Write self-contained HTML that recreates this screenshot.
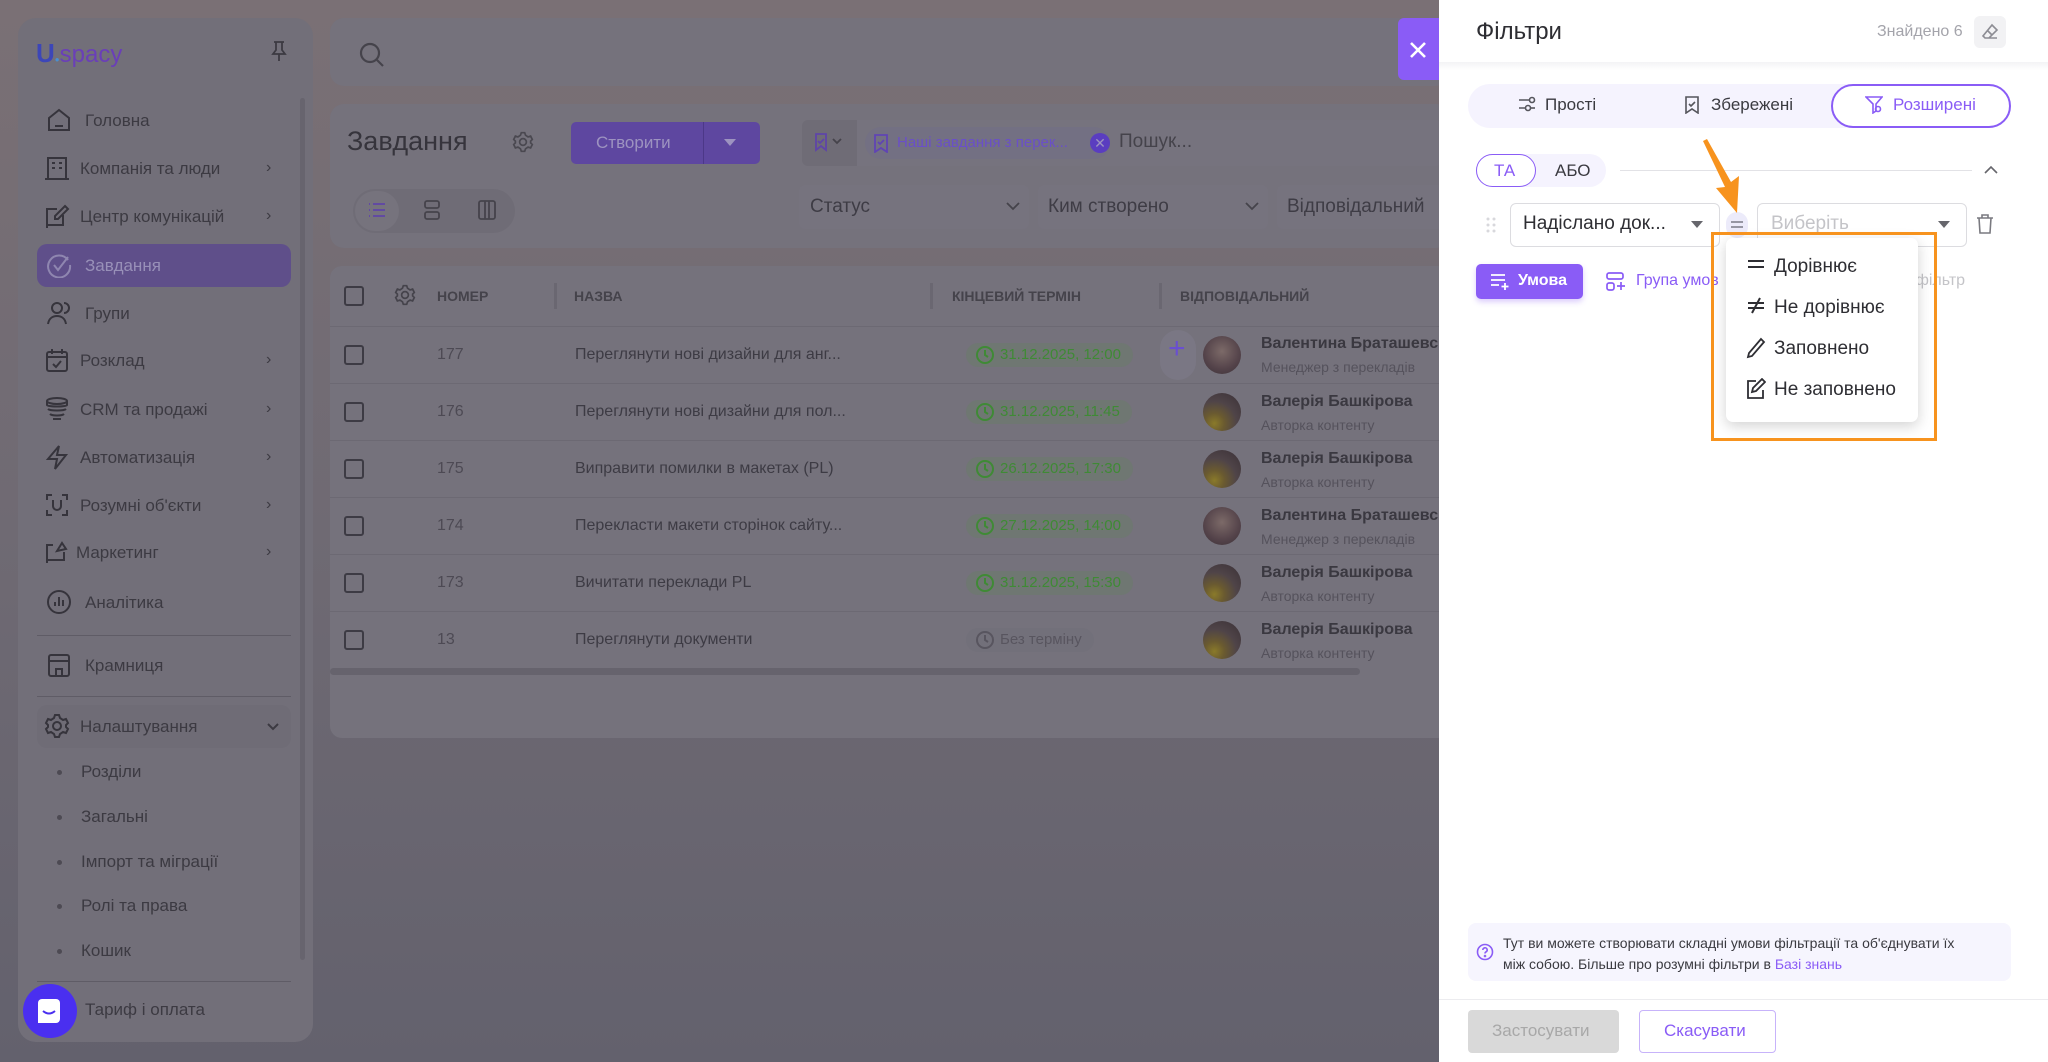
<!DOCTYPE html>
<html><head><meta charset="utf-8">
<style>
*{box-sizing:border-box;margin:0;padding:0}
body{width:2048px;height:1062px;overflow:hidden;position:relative;font-family:"Liberation Sans","Noto Sans CJK SC",sans-serif;background:linear-gradient(180deg,#7a7075 0%,#6f6a73 50%,#63616d 100%)}
.a{position:absolute}
.t{position:absolute;white-space:nowrap}
.card{position:absolute;background:#75727c;border-radius:14px}
.mi{position:absolute;left:85px;font-size:17px;color:#3c3a42;white-space:nowrap}
.ic{position:absolute;left:46px;width:26px;height:26px}
.chev{position:absolute;left:266px;font-size:16px;color:#3c3a42}
.sub{position:absolute;left:81px;font-size:17px;color:#3c3a42;white-space:nowrap}
.dot{position:absolute;left:57px;width:5px;height:5px;border-radius:50%;background:#4d4a53}
.row{position:absolute;left:330px;width:1109px;height:57px;border-top:1px solid #6c6973}
.cb{position:absolute;left:344px;width:20px;height:20px;border:2px solid #3d3b44;border-radius:3px}
.num{position:absolute;left:437px;font-size:16px;color:#4d4a54}
.nm{position:absolute;left:575px;font-size:16px;color:#3d3b44;white-space:nowrap}
.pill{position:absolute;left:966px;height:24px;border-radius:12px;background:#6f7772;color:#3f8a35;font-size:15px;padding:3px 12px 0 34px;white-space:nowrap}
.pill svg{position:absolute;left:9px;top:2px}
.av{position:absolute;left:1203px;width:38px;height:38px;border-radius:50%;background:radial-gradient(circle at 50% 40%,#7c6a68 0,#54434a 60%,#3c3238 100%)}
.av.s{background:radial-gradient(circle at 30% 80%,#8a7a2a 0,#6a5a30 25%,#4f4448 55%,#3a3036 100%)}
.pn{position:absolute;left:1261px;font-size:16px;color:#3a3840;font-weight:bold;white-space:nowrap}
.pr{position:absolute;left:1261px;font-size:14px;color:#55525c;white-space:nowrap}
.mn{position:absolute;left:1774px;font-size:19px;color:#2e2e33;white-space:nowrap}
</style></head><body>

<!-- sidebar -->
<div class="card" style="left:18px;top:18px;width:295px;height:1024px;background:#726f79;border-radius:18px"></div>
<div class="a" style="left:300px;top:98px;width:5px;height:862px;background:#67646e;border-radius:3px"></div>
<div class="t" style="left:36px;top:38px;font-size:26px;color:#5a3fb0;font-weight:bold"><span style="color:#3c46b8">U</span><span style="font-size:8px;color:#4a8fd0">●</span><span style="color:#6a3fb8;font-weight:normal;font-size:24px">spacy</span></div>
<svg class="a" style="left:270px;top:40px" width="18" height="22" viewBox="0 0 18 22" fill="none" stroke="#3c3a42" stroke-width="1.8"><path d="M4 2h10M6 2v8l-3 4h12l-3-4V2M9 14v7"/></svg>

<div class="a" style="left:37px;top:244px;width:254px;height:43px;background:#5f4f8a;border-radius:10px"></div>

<svg class="ic" style="top:107px" viewBox="0 0 26 26" fill="none" stroke="#36343c" stroke-width="2"><path d="M3 11L13 3l10 8v12H3z M9 19h8"/></svg>
<div class="mi" style="top:111px">Головна</div>
<svg class="ic" style="top:155px;left:44px" viewBox="0 0 26 26" fill="none" stroke="#36343c" stroke-width="2"><path d="M4 24V3h18v21M1 24h24M8 8h3M15 8h3M8 13h3M15 13h3"/></svg>
<div class="mi" style="top:159px;left:80px">Компанія та люди</div><div class="chev" style="top:159px">›</div>
<svg class="ic" style="top:203px;left:44px" viewBox="0 0 26 26" fill="none" stroke="#36343c" stroke-width="2"><path d="M3 25V6h10M21 3l3 3-10 10H11v-3z M3 22h16V12"/></svg>
<div class="mi" style="top:207px;left:80px">Центр комунікацій</div><div class="chev" style="top:207px">›</div>
<svg class="ic" style="top:252px" viewBox="0 0 26 26" fill="none" stroke="#8f86b0" stroke-width="2"><path d="M22 8A11 11 0 1 0 24 13M8 13l4 5 10-13"/></svg>
<div class="mi" style="top:256px;color:#9890b8">Завдання</div>
<svg class="ic" style="top:300px" viewBox="0 0 26 26" fill="none" stroke="#36343c" stroke-width="2"><circle cx="11" cy="8" r="5"/><path d="M2 24c1-6 5-8 9-8s8 2 9 8M18 3a5 5 0 0 1 0 10"/></svg>
<div class="mi" style="top:304px">Групи</div>
<svg class="ic" style="top:347px;left:44px" viewBox="0 0 26 26" fill="none" stroke="#36343c" stroke-width="2"><rect x="3" y="5" width="20" height="19" rx="2"/><path d="M3 10h20M8 2v5M18 2v5M9 17l3 3 5-6"/></svg>
<div class="mi" style="top:351px;left:80px">Розклад</div><div class="chev" style="top:351px">›</div>
<svg class="ic" style="top:396px;left:44px" viewBox="0 0 26 26" fill="none" stroke="#36343c" stroke-width="2"><ellipse cx="13" cy="5" rx="10" ry="3"/><path d="M3 5v4c0 2 20 2 20 0V5M4 13c2 2 16 2 18 0M6 18c2 2 12 2 14 0M9 23h8"/></svg>
<div class="mi" style="top:400px;left:80px">CRM та продажі</div><div class="chev" style="top:400px">›</div>
<svg class="ic" style="top:444px;left:44px" viewBox="0 0 26 26" fill="none" stroke="#36343c" stroke-width="2"><path d="M15 2L4 15h9l-2 10 11-14h-9z"/></svg>
<div class="mi" style="top:448px;left:80px">Автоматизація</div><div class="chev" style="top:448px">›</div>
<svg class="ic" style="top:492px;left:44px" viewBox="0 0 26 26" fill="none" stroke="#36343c" stroke-width="2"><path d="M3 8V3h5M18 3h5v5M23 18v5h-5M8 23H3v-5M9 8v6a4 4 0 0 0 8 0V8"/></svg>
<div class="mi" style="top:496px;left:80px">Розумні об'єкти</div><div class="chev" style="top:496px">›</div>
<svg class="ic" style="top:539px;left:44px" viewBox="0 0 26 26" fill="none" stroke="#36343c" stroke-width="2"><path d="M3 24V6h6M3 21h17V13M13 12l5-8 4 6z"/></svg>
<div class="mi" style="top:543px;left:76px">Маркетинг</div><div class="chev" style="top:543px">›</div>
<svg class="ic" style="top:589px" viewBox="0 0 26 26" fill="none" stroke="#36343c" stroke-width="2"><circle cx="13" cy="13" r="11"/><path d="M9 17v-4M13 17V8M17 17v-6"/></svg>
<div class="mi" style="top:593px">Аналітика</div>
<div class="a" style="left:37px;top:635px;width:254px;height:1px;background:#5f5c66"></div>
<svg class="ic" style="top:652px" viewBox="0 0 26 26" fill="none" stroke="#36343c" stroke-width="2"><rect x="3" y="3" width="20" height="21" rx="2"/><path d="M3 9h20M10 24v-7h6v7"/></svg>
<div class="mi" style="top:656px">Крамниця</div>
<div class="a" style="left:37px;top:696px;width:254px;height:1px;background:#5f5c66"></div>
<div class="a" style="left:37px;top:705px;width:254px;height:43px;background:#6f6c76;border-radius:10px"></div>
<svg class="ic" style="top:713px;left:44px" viewBox="0 0 26 26" fill="none" stroke="#36343c" stroke-width="2"><circle cx="13" cy="13" r="4"/><path d="M11 2h4l1 3 3 2 3-1 2 4-2 2v2l2 2-2 4-3-1-3 2-1 3h-4l-1-3-3-2-3 1-2-4 2-2v-2l-2-2 2-4 3 1 3-2z"/></svg>
<div class="mi" style="top:717px;left:80px">Налаштування</div>
<svg class="a" style="left:266px;top:722px" width="14" height="10" viewBox="0 0 14 10" fill="none" stroke="#3c3a42" stroke-width="2"><path d="M2 2l5 5 5-5"/></svg>
<div class="dot" style="top:770px"></div><div class="sub" style="top:762px">Розділи</div>
<div class="dot" style="top:815px"></div><div class="sub" style="top:807px">Загальні</div>
<div class="dot" style="top:860px"></div><div class="sub" style="top:852px">Імпорт та міграції</div>
<div class="dot" style="top:904px"></div><div class="sub" style="top:896px">Ролі та права</div>
<div class="dot" style="top:949px"></div><div class="sub" style="top:941px">Кошик</div>
<div class="a" style="left:37px;top:981px;width:254px;height:1px;background:#5f5c66"></div>
<div class="mi" style="top:1000px">Тариф і оплата</div>
<div class="a" style="left:23px;top:984px;width:54px;height:54px;border-radius:50%;background:#4a2ff0"></div>
<div class="a" style="left:38px;top:999px;width:22px;height:24px;background:#fff;border-radius:4px 4px 4px 0"></div>
<svg class="a" style="left:41px;top:1010px" width="16" height="6"><path d="M2 1q6 5 12 0" stroke="#4a2ff0" stroke-width="2" fill="none"/></svg>

<!-- top bar -->
<div class="card" style="left:330px;top:18px;width:1120px;height:68px"></div>
<svg class="a" style="left:358px;top:41px" width="28" height="28" viewBox="0 0 28 28" fill="none" stroke="#45434b" stroke-width="2.2"><circle cx="12" cy="12" r="9"/><path d="M19 19l6 6"/></svg>

<!-- tasks header -->
<div class="card" style="left:330px;top:104px;width:1120px;height:144px"></div>
<div class="t" style="left:347px;top:126px;font-size:27px;color:#36343c">Завдання</div>
<svg class="a" style="left:512px;top:131px" width="22" height="22" viewBox="0 0 26 26" fill="none" stroke="#4a4850" stroke-width="2"><circle cx="13" cy="13" r="4"/><path d="M11 2h4l1 3 3 2 3-1 2 4-2 2v2l2 2-2 4-3-1-3 2-1 3h-4l-1-3-3-2-3 1-2-4 2-2v-2l-2-2 2-4 3 1 3-2z"/></svg>
<div class="a" style="left:571px;top:122px;width:189px;height:42px;background:#5e47a0;border-radius:5px"></div>
<div class="a" style="left:703px;top:122px;width:1px;height:42px;background:#4c3888"></div>
<div class="t" style="left:596px;top:133px;font-size:17px;color:#9d93c0">Створити</div>
<svg class="a" style="left:724px;top:139px" width="12" height="8"><path d="M0 0h12L6 7z" fill="#9d93c0"/></svg>
<div class="a" style="left:802px;top:120px;width:640px;height:46px;background:#76737e;border-radius:6px"></div>
<div class="a" style="left:802px;top:120px;width:55px;height:46px;background:#6f6c76;border-radius:6px 0 0 6px"></div>
<svg class="a" style="left:814px;top:132px" width="30" height="20" viewBox="0 0 30 20" fill="none" stroke="#5f45a8" stroke-width="1.8"><path d="M2 2h10v16l-5-4-5 4zM4 9l2 2 4-4"/><path d="M19 7l4 4 4-4" stroke="#45434b"/></svg>
<div class="a" style="left:865px;top:127px;width:245px;height:32px;background:#737083;border-radius:16px"></div>
<svg class="a" style="left:873px;top:134px" width="16" height="19" viewBox="0 0 16 19" fill="none" stroke="#6044b4" stroke-width="1.8"><path d="M2 1h12v17l-6-4-6 4zM5 8l2 2 4-4"/></svg>
<div class="t" style="left:897px;top:134px;font-size:15px;color:#6a4fc8">Наші завдання з перек...</div>
<div class="a" style="left:1090px;top:133px;width:20px;height:20px;border-radius:50%;background:#5a3dc0;color:#9d93c0;font-size:14px;text-align:center;line-height:20px">✕</div>
<div class="t" style="left:1119px;top:131px;font-size:19px;color:#45434b">Пошук...</div>
<div class="a" style="left:353px;top:189px;width:162px;height:44px;background:#6f6c76;border-radius:22px"></div>
<div class="a" style="left:355px;top:191px;width:44px;height:40px;background:#76737d;border-radius:20px"></div>
<svg class="a" style="left:368px;top:202px" width="18" height="16" viewBox="0 0 18 16" fill="none" stroke="#5f45a8" stroke-width="1.8"><path d="M5 2h12M5 8h12M5 14h12M1 2h1M1 8h1M1 14h1"/></svg>
<svg class="a" style="left:424px;top:200px" width="16" height="20" viewBox="0 0 16 20" fill="none" stroke="#45434b" stroke-width="1.8"><rect x="1" y="1" width="14" height="7" rx="2"/><rect x="1" y="12" width="14" height="7" rx="2"/></svg>
<svg class="a" style="left:478px;top:200px" width="18" height="20" viewBox="0 0 18 20" fill="none" stroke="#45434b" stroke-width="1.8"><rect x="1" y="1" width="16" height="18" rx="2"/><path d="M7 1v18M11 1v18"/></svg>
<div class="a" style="left:799px;top:185px;width:230px;height:44px;background:#76737e;border-radius:6px"></div>
<div class="t" style="left:810px;top:196px;font-size:19px;color:#3e3c45">Статус</div>
<svg class="a" style="left:1006px;top:202px" width="14" height="9" fill="none" stroke="#45434b" stroke-width="1.8"><path d="M1 1l6 6 6-6"/></svg>
<div class="a" style="left:1038px;top:185px;width:230px;height:44px;background:#76737e;border-radius:6px"></div>
<div class="t" style="left:1048px;top:196px;font-size:19px;color:#3e3c45">Ким створено</div>
<svg class="a" style="left:1245px;top:202px" width="14" height="9" fill="none" stroke="#45434b" stroke-width="1.8"><path d="M1 1l6 6 6-6"/></svg>
<div class="a" style="left:1277px;top:185px;width:170px;height:44px;background:#76737e;border-radius:6px"></div>
<div class="t" style="left:1287px;top:196px;font-size:19px;color:#3e3c45">Відповідальний</div>

<!-- table -->
<div class="card" style="left:330px;top:266px;width:1120px;height:472px;border-radius:12px"></div>
<div class="cb" style="top:286px"></div>
<svg class="a" style="left:394px;top:284px" width="22" height="22" viewBox="0 0 26 26" fill="none" stroke="#45434b" stroke-width="2"><circle cx="13" cy="13" r="4"/><path d="M11 2h4l1 3 3 2 3-1 2 4-2 2v2l2 2-2 4-3-1-3 2-1 3h-4l-1-3-3-2-3 1-2-4 2-2v-2l-2-2 2-4 3 1 3-2z"/></svg>
<div class="t" style="left:437px;top:288px;font-size:14px;font-weight:bold;color:#45434b">НОМЕР</div>
<div class="a" style="left:554px;top:283px;width:3px;height:26px;background:#6a6771"></div>
<div class="t" style="left:574px;top:288px;font-size:14px;font-weight:bold;color:#45434b">НАЗВА</div>
<div class="a" style="left:930px;top:283px;width:3px;height:26px;background:#6a6771"></div>
<div class="t" style="left:952px;top:288px;font-size:14px;font-weight:bold;color:#45434b">КІНЦЕВИЙ ТЕРМІН</div>
<div class="a" style="left:1159px;top:283px;width:3px;height:26px;background:#6a6771"></div>
<div class="t" style="left:1180px;top:288px;font-size:14px;font-weight:bold;color:#45434b">ВІДПОВІДАЛЬНИЙ</div>

<div class="row" style="top:326px"></div>
<div class="row" style="top:383px"></div>
<div class="row" style="top:440px"></div>
<div class="row" style="top:497px"></div>
<div class="row" style="top:554px"></div>
<div class="row" style="top:611px"></div>
<div class="a" style="left:330px;top:668px;width:1030px;height:7px;background:#66636d;border-radius:4px"></div>

<div class="a" style="left:1160px;top:330px;width:36px;height:50px;background:#7a7784;border-radius:18px"></div>
<div class="t" style="left:1168px;top:332px;font-size:30px;color:#6a4fd0">+</div>

<div class="cb" style="top:345px"></div><div class="num" style="top:346px">177</div><div class="nm" style="top:346px">Переглянути нові дизайни для анг...</div>
<div class="pill" style="top:343px"><svg width="20" height="20" viewBox="0 0 20 20" fill="none" stroke="#3f8a35" stroke-width="2"><circle cx="10" cy="10" r="8"/><path d="M10 5v5l3 2"/></svg>31.12.2025, 12:00</div>
<div class="av" style="top:336px"></div><div class="pn" style="top:335px">Валентина Браташевс</div><div class="pr" style="top:359px">Менеджер з перекладів</div>

<div class="cb" style="top:402px"></div><div class="num" style="top:403px">176</div><div class="nm" style="top:403px">Переглянути нові дизайни для пол...</div>
<div class="pill" style="top:400px"><svg width="20" height="20" viewBox="0 0 20 20" fill="none" stroke="#3f8a35" stroke-width="2"><circle cx="10" cy="10" r="8"/><path d="M10 5v5l3 2"/></svg>31.12.2025, 11:45</div>
<div class="av s" style="top:393px"></div><div class="pn" style="top:393px">Валерія Башкірова</div><div class="pr" style="top:417px">Авторка контенту</div>

<div class="cb" style="top:459px"></div><div class="num" style="top:460px">175</div><div class="nm" style="top:460px">Виправити помилки в макетах (PL)</div>
<div class="pill" style="top:457px"><svg width="20" height="20" viewBox="0 0 20 20" fill="none" stroke="#3f8a35" stroke-width="2"><circle cx="10" cy="10" r="8"/><path d="M10 5v5l3 2"/></svg>26.12.2025, 17:30</div>
<div class="av s" style="top:450px"></div><div class="pn" style="top:450px">Валерія Башкірова</div><div class="pr" style="top:474px">Авторка контенту</div>

<div class="cb" style="top:516px"></div><div class="num" style="top:517px">174</div><div class="nm" style="top:517px">Перекласти макети сторінок сайту...</div>
<div class="pill" style="top:514px"><svg width="20" height="20" viewBox="0 0 20 20" fill="none" stroke="#3f8a35" stroke-width="2"><circle cx="10" cy="10" r="8"/><path d="M10 5v5l3 2"/></svg>27.12.2025, 14:00</div>
<div class="av" style="top:507px"></div><div class="pn" style="top:507px">Валентина Браташевс</div><div class="pr" style="top:531px">Менеджер з перекладів</div>

<div class="cb" style="top:573px"></div><div class="num" style="top:574px">173</div><div class="nm" style="top:574px">Вичитати переклади PL</div>
<div class="pill" style="top:571px"><svg width="20" height="20" viewBox="0 0 20 20" fill="none" stroke="#3f8a35" stroke-width="2"><circle cx="10" cy="10" r="8"/><path d="M10 5v5l3 2"/></svg>31.12.2025, 15:30</div>
<div class="av s" style="top:564px"></div><div class="pn" style="top:564px">Валерія Башкірова</div><div class="pr" style="top:588px">Авторка контенту</div>

<div class="cb" style="top:630px"></div><div class="num" style="top:631px">13</div><div class="nm" style="top:631px">Переглянути документи</div>
<div class="pill" style="top:628px;background:#72707a;color:#58555f"><svg width="20" height="20" viewBox="0 0 20 20" fill="none" stroke="#58555f" stroke-width="2"><circle cx="10" cy="10" r="8"/><path d="M10 5v5l3 2"/></svg>Без терміну</div>
<div class="av s" style="top:621px"></div><div class="pn" style="top:621px">Валерія Башкірова</div><div class="pr" style="top:645px">Авторка контенту</div>

<!-- close button -->
<div class="a" style="left:1398px;top:18px;width:41px;height:62px;background:#8a5cf6;border-radius:6px 0 0 6px"></div>
<svg class="a" style="left:1409px;top:41px" width="18" height="18" fill="none" stroke="#fff" stroke-width="2.6"><path d="M2 2l14 14M16 2L2 16"/></svg>

<!-- panel -->
<div class="a" style="left:1439px;top:0;width:609px;height:1062px;background:#fff"></div>
<div class="a" style="left:1439px;top:62px;width:609px;height:8px;background:linear-gradient(#f3f3f5,#fff)"></div>
<div class="t" style="left:1476px;top:18px;font-size:24px;color:#2e2e33">Фільтри</div>
<div class="t" style="left:1877px;top:23px;font-size:16px;color:#a4a4ab">Знайдено 6</div>
<div class="a" style="left:1974px;top:16px;width:32px;height:32px;background:#f2f2f4;border-radius:6px"></div>
<svg class="a" style="left:1981px;top:23px" width="18" height="18" viewBox="0 0 18 18" fill="none" stroke="#8d8d94" stroke-width="1.6"><path d="M11 2l5 5-8 8H4l-2-2z M6 7l5 5 M8 15h8"/></svg>

<div class="a" style="left:1468px;top:84px;width:543px;height:44px;background:#f5f3fe;border-radius:22px"></div>
<div class="a" style="left:1831px;top:84px;width:180px;height:44px;border:2px solid #8a5cf6;border-radius:22px;background:#fff"></div>
<svg class="a" style="left:1518px;top:96px" width="18" height="16" viewBox="0 0 18 16" fill="none" stroke="#55555c" stroke-width="1.6"><path d="M1 4h10M1 12h6"/><circle cx="14" cy="4" r="2.5"/><circle cx="10" cy="12" r="2.5"/><path d="M13 12h4"/></svg>
<div class="t" style="left:1545px;top:95px;font-size:17px;color:#3a3a40">Прості</div>
<svg class="a" style="left:1685px;top:96px" width="14" height="18" viewBox="0 0 14 18" fill="none" stroke="#55555c" stroke-width="1.6"><path d="M1 1h12v16l-6-4-6 4zM4 8l2 2 4-4"/></svg>
<div class="t" style="left:1711px;top:95px;font-size:17px;color:#3a3a40">Збережені</div>
<svg class="a" style="left:1865px;top:96px" width="18" height="18" viewBox="0 0 18 18" fill="none" stroke="#8a5cf6" stroke-width="1.6"><path d="M1 1h16l-6 7v7l-3 2V8z"/><circle cx="13" cy="13" r="2.5"/></svg>
<div class="t" style="left:1893px;top:95px;font-size:17px;color:#8a5cf6">Розширені</div>

<div class="a" style="left:1476px;top:154px;width:130px;height:33px;background:#f5f3fe;border-radius:17px"></div>
<div class="a" style="left:1476px;top:154px;width:60px;height:33px;border:1.5px solid #8a5cf6;border-radius:17px;background:#fff"></div>
<div class="t" style="left:1494px;top:161px;font-size:17px;color:#8a5cf6">ТА</div>
<div class="t" style="left:1555px;top:161px;font-size:17px;color:#3a3a40">АБО</div>
<div class="a" style="left:1620px;top:170px;width:352px;height:1px;background:#e2e2e6"></div>
<svg class="a" style="left:1984px;top:165px" width="14" height="9" fill="none" stroke="#66666c" stroke-width="1.6"><path d="M1 8l6-6 6 6"/></svg>

<svg class="a" style="left:1486px;top:217px" width="10" height="16"><g fill="#d8d8dc"><circle cx="2" cy="2" r="1.5"/><circle cx="8" cy="2" r="1.5"/><circle cx="2" cy="8" r="1.5"/><circle cx="8" cy="8" r="1.5"/><circle cx="2" cy="14" r="1.5"/><circle cx="8" cy="14" r="1.5"/></g></svg>
<div class="a" style="left:1510px;top:203px;width:210px;height:44px;border:1px solid #dcdce0;border-radius:6px"></div>
<div class="t" style="left:1523px;top:213px;font-size:19px;color:#2e2e33">Надіслано док...</div>
<svg class="a" style="left:1691px;top:221px" width="12" height="8"><path d="M0 0h12L6 7z" fill="#66666c"/></svg>
<div class="a" style="left:1726px;top:212px;width:22px;height:26px;background:#ecebfa;border-radius:11px"></div>
<svg class="a" style="left:1731px;top:220px" width="12" height="9" stroke="#7a7a86" stroke-width="1.6"><path d="M0 2h12M0 7h12"/></svg>
<div class="a" style="left:1757px;top:203px;width:210px;height:44px;border:1px solid #dcdce0;border-radius:6px"></div>
<div class="t" style="left:1771px;top:213px;font-size:19px;color:#c4c4c8">Виберіть</div>
<svg class="a" style="left:1938px;top:221px" width="12" height="8"><path d="M0 0h12L6 7z" fill="#66666c"/></svg>
<svg class="a" style="left:1976px;top:214px" width="18" height="20" viewBox="0 0 18 20" fill="none" stroke="#7a7a80" stroke-width="1.6"><path d="M1 4h16M6 4V1h6v3M3 4l1 15h10l1-15"/></svg>

<div class="a" style="left:1476px;top:264px;width:107px;height:35px;background:#8a5cf6;border-radius:5px;box-shadow:0 3px 6px rgba(138,92,246,.3)"></div>
<svg class="a" style="left:1490px;top:273px" width="20" height="18" viewBox="0 0 20 18" fill="none" stroke="#fff" stroke-width="1.8"><path d="M1 2h14M1 7h14M1 12h8M15 10v7M11.5 13.5h7"/></svg>
<div class="t" style="left:1518px;top:272px;font-size:16px;color:#fff;font-weight:bold">Умова</div>
<svg class="a" style="left:1606px;top:272px" width="20" height="20" viewBox="0 0 20 20" fill="none" stroke="#8a5cf6" stroke-width="1.7"><rect x="1" y="1" width="16" height="6" rx="2"/><rect x="1" y="11" width="7" height="7" rx="2"/><path d="M15 10v8M11 14h8"/></svg>
<div class="t" style="left:1636px;top:272px;font-size:16px;color:#8a5cf6">Група умов</div>
<div class="t" style="left:1895px;top:272px;font-size:16px;color:#c4c4c8">ти фільтр</div>

<!-- dropdown -->
<div class="a" style="left:1726px;top:238px;width:192px;height:184px;background:#fff;border-radius:7px;box-shadow:0 4px 14px rgba(0,0,0,.18)"></div>
<svg class="a" style="left:1747px;top:258px" width="18" height="12" stroke="#2e2e33" stroke-width="2"><path d="M1 3h16M1 9h16"/></svg>
<div class="mn" style="top:256px">Дорівнює</div>
<svg class="a" style="left:1747px;top:296px" width="18" height="18" stroke="#2e2e33" stroke-width="2"><path d="M1 7h16M1 12h16M13 2L5 17"/></svg>
<div class="mn" style="top:297px">Не дорівнює</div>
<svg class="a" style="left:1746px;top:337px" width="20" height="22" viewBox="0 0 20 22" fill="none" stroke="#2e2e33" stroke-width="1.8"><path d="M15 2l3 3L6 19l-4 1 1-4z"/></svg>
<div class="mn" style="top:338px">Заповнено</div>
<svg class="a" style="left:1746px;top:378px" width="20" height="22" viewBox="0 0 20 22" fill="none" stroke="#2e2e33" stroke-width="1.8"><path d="M10 3H2v17h15v-8M16 1l3 3-9 9-4 1 1-4z"/></svg>
<div class="mn" style="top:379px">Не заповнено</div>

<!-- orange highlight -->
<div class="a" style="left:1711px;top:232px;width:226px;height:209px;border:3px solid #f7931e"></div>
<svg class="a" style="left:1695px;top:135px" width="60" height="85" viewBox="0 0 60 85"><path d="M8 6 L30 52 L21 53 L42 78 L44 41 L36 47 L12 4 Z" fill="#f7931e"/></svg>

<!-- help -->
<div class="a" style="left:1468px;top:923px;width:543px;height:58px;background:#f6f5fe;border-radius:8px"></div>
<svg class="a" style="left:1476px;top:943px" width="18" height="18" viewBox="0 0 18 18" fill="none" stroke="#8a5cf6" stroke-width="1.6"><circle cx="9" cy="9" r="7.5"/><path d="M6.8 7a2.2 2.2 0 1 1 3 2c-.6.3-.8.7-.8 1.5"/><circle cx="9" cy="13" r=".5"/></svg>
<div class="t" style="left:1503px;top:933px;font-size:14px;color:#3a3a40;line-height:21px">Тут ви можете створювати складні умови фільтрації та об'єднувати їх<br>між собою. Більше про розумні фільтри в <span style="color:#8a5cf6">Базі знань</span></div>
<div class="a" style="left:1439px;top:999px;width:609px;height:1px;background:#ececef"></div>
<div class="a" style="left:1468px;top:1010px;width:151px;height:43px;background:#d9d9d9;border-radius:4px"></div>
<div class="t" style="left:1492px;top:1021px;font-size:17px;color:#a8a8a8">Застосувати</div>
<div class="a" style="left:1639px;top:1010px;width:137px;height:43px;border:1.5px solid #c7b3fa;border-radius:4px"></div>
<div class="t" style="left:1664px;top:1021px;font-size:17px;color:#8a5cf6">Скасувати</div>
</body></html>
